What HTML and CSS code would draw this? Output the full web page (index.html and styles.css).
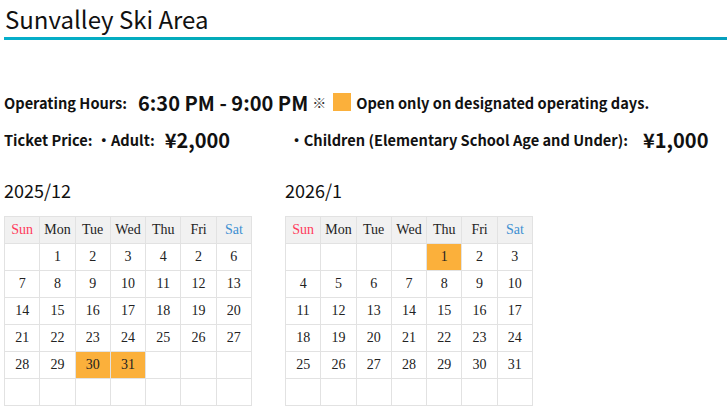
FILE: index.html
```html
<!DOCTYPE html>
<html lang="en">
<head>
<meta charset="utf-8">
<link rel="stylesheet" href="styles.css">
</head>
<body>
<div class="page">
  <h1 class="title">Sunvalley Ski Area</h1>
  <div class="title-rule"></div>

  <div class="info-row hours">
    <span class="label">Operating Hours:</span>
    <span class="big">6:30 PM - 9:00 PM</span>
    <span class="note">※</span>
    <span class="swatch"></span>
    <span class="label">Open only on designated operating days.</span>
  </div>

  <div class="info-row price">
    <span class="label">Ticket Price:</span>
    <span class="label">・Adult:</span>
    <span class="big">¥2,000</span>
    <span class="label child">・Children (Elementary School Age and Under):</span>
    <span class="big last">¥1,000</span>
  </div>

  <div class="calendars">
    <div class="month">
      <div class="month-title">2025/12</div>
      <table class="cal">
        <tr><th class="sun">Sun</th><th>Mon</th><th>Tue</th><th>Wed</th><th>Thu</th><th>Fri</th><th class="sat">Sat</th></tr>
        <tr><td></td><td>1</td><td>2</td><td>3</td><td>4</td><td>2</td><td>6</td></tr>
        <tr><td>7</td><td>8</td><td>9</td><td>10</td><td>11</td><td>12</td><td>13</td></tr>
        <tr><td>14</td><td>15</td><td>16</td><td>17</td><td>18</td><td>19</td><td>20</td></tr>
        <tr><td>21</td><td>22</td><td>23</td><td>24</td><td>25</td><td>26</td><td>27</td></tr>
        <tr><td>28</td><td>29</td><td class="open">30</td><td class="open">31</td><td></td><td></td><td></td></tr>
        <tr><td></td><td></td><td></td><td></td><td></td><td></td><td></td></tr>
      </table>
    </div>
    <div class="month">
      <div class="month-title">2026/1</div>
      <table class="cal">
        <tr><th class="sun">Sun</th><th>Mon</th><th>Tue</th><th>Wed</th><th>Thu</th><th>Fri</th><th class="sat">Sat</th></tr>
        <tr><td></td><td></td><td></td><td></td><td class="open">1</td><td>2</td><td>3</td></tr>
        <tr><td>4</td><td>5</td><td>6</td><td>7</td><td>8</td><td>9</td><td>10</td></tr>
        <tr><td>11</td><td>12</td><td>13</td><td>14</td><td>15</td><td>16</td><td>17</td></tr>
        <tr><td>18</td><td>19</td><td>20</td><td>21</td><td>22</td><td>23</td><td>24</td></tr>
        <tr><td>25</td><td>26</td><td>27</td><td>28</td><td>29</td><td>30</td><td>31</td></tr>
        <tr><td></td><td></td><td></td><td></td><td></td><td></td><td></td></tr>
      </table>
    </div>
  </div>
</div>
</body>
</html>
```

FILE: styles.css
```css
html, body {
  margin: 0;
  padding: 0;
  background: #fff;
}
.page {
  font-family: "Noto Sans CJK JP", "Noto Sans", sans-serif;
  color: #111;
  padding: 0 0 0 4px;
}
.title {
  margin: 0;
  padding: 2px 0 0 1px;
  font-size: 24px;
  font-weight: 400;
  line-height: 33px;
  color: #111;
}
.title-rule {
  height: 3px;
  margin-top: 2px;
  background: linear-gradient(to right, #06aecb, #00a8a9 55%, #069fbd);
}
.info-row {
  display: flex;
  align-items: center;
  white-space: nowrap;
}
.hours {
  margin-top: 48px;
  height: 28px;
}
.price {
  margin-top: 9px;
  height: 28px;
}
.label {
  font-size: 14.6px;
  font-weight: 700;
}
.big {
  font-size: 20px;
  font-weight: 700;
  margin: 0 4px 0 11px;
}
.note {
  font-size: 14px;
  color: #333;
  margin-right: 7px;
}
.swatch {
  display: inline-block;
  width: 18px;
  height: 18px;
  background: #fbb03b;
  margin-right: 5px;
}
.price .label:first-child {
  margin-right: 4px;
}
.child {
  margin-left: 55px;
}
.price .big {
  margin-left: 10px;
}
.price .big.last {
  margin-left: 15px;
}
.calendars {
  display: flex;
  gap: 33px;
  margin-top: 25px;
}
.month-title {
  font-size: 18px;
  line-height: 24px;
  margin-bottom: 14px;
}
.cal {
  border-collapse: collapse;
  table-layout: fixed;
  width: 248px;
  font-family: serif;
  font-size: 14px;
  color: #222;
}
.cal th, .cal td {
  border: 1px solid #e2e2e2;
  height: 26px;
  padding: 0;
  text-align: center;
  font-weight: 400;
}
.cal th {
  background: #f1f1f1;
}
.cal th.sun {
  color: #ff3b5c;
}
.cal th.sat {
  color: #3d8fd1;
}
.cal td.open {
  background: #fbb03b;
}
```
